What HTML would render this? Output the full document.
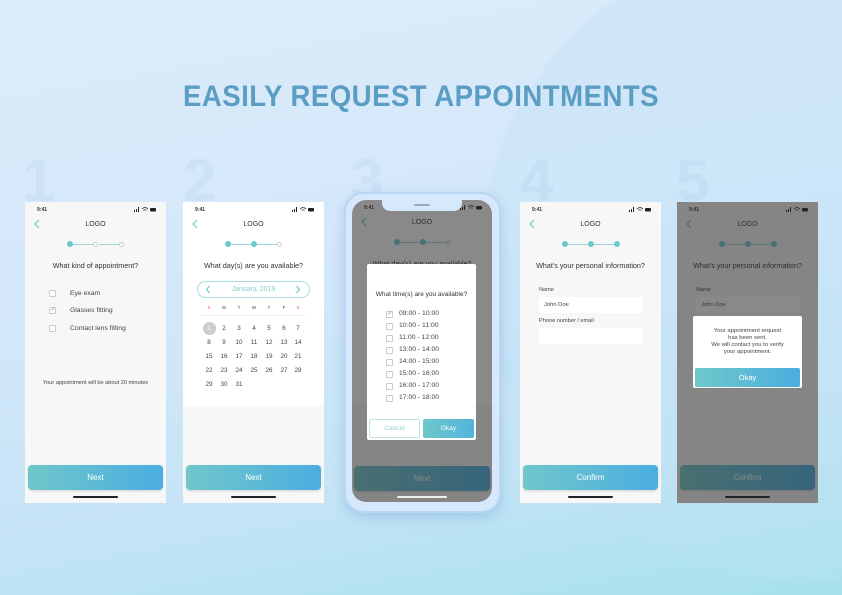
<!DOCTYPE html>
<html><head><meta charset="utf-8"><style>
*{margin:0;padding:0;box-sizing:border-box}
html,body{width:842px;height:595px;overflow:hidden}
#wrap{position:relative;width:842px;height:595px;overflow:hidden;font-family:"Liberation Sans",sans-serif;
background:linear-gradient(170deg,#dcecfa 0%,#d3e7fa 45%,#c4e4f6 75%,#a6e1ec 100%);}
.blob{position:absolute;left:480px;top:-60px;width:640px;height:640px;border-radius:50%;background:rgba(190,225,245,0.3)}
.title{position:absolute;left:0;top:80px;width:842px;text-align:center;font-family:"Liberation Sans Narrow","Liberation Sans",sans-serif;font-weight:bold;font-size:30px;letter-spacing:0.5px;color:#5b9ec4;transform:scaleX(0.92);transform-origin:421px 0}
.num{position:absolute;top:146px;font-size:60px;font-weight:bold;color:rgba(165,200,230,0.2)}
.scr{position:absolute;top:202px;width:141px;height:301px;background:#f7f7f7;overflow:hidden;color:#444}
.a{position:absolute}
.st{left:12px;top:5px;font-size:5px;font-weight:bold;color:#333}
.ic{right:10px;top:5px;width:22px;height:5px}
.back{left:8px;top:17px;width:8px;height:10px}
.logo{left:0;width:100%;top:19px;text-align:center;font-size:7px;color:#333}
.dot{width:6px;height:6px;border-radius:50%;background:#6cc8c9;top:39px}
.dot.o{width:5px;height:5px;background:#fff;border:1px solid #ccc;top:39.5px}
.ln{height:1px;background:#9bd6d6;top:42px;width:20px}
.q{left:0;width:100%;text-align:center;top:59px;font-size:7.2px;color:#333}
.cb{width:7px;height:7px;border:1px solid #ccc;background:#fff;border-radius:1px}
.lab{font-size:6.8px;color:#444}
.btn{left:3px;top:263px;width:135px;height:25px;border-radius:4px;background:linear-gradient(90deg,#70c7ca,#4aaee0);color:#fff;font-size:8px;text-align:center;line-height:25px;box-shadow:0 1px 2px rgba(0,0,0,.15)}
.hb{left:48px;top:294px;width:45px;height:2px;background:#222;border-radius:1px}
.ov{left:0;top:0;width:100%;height:100%;background:rgba(40,40,40,0.55)}
.cal{font-size:6.3px;color:#444;text-align:center;width:14px}
.fld{left:19px;width:104px;height:16px;background:#fff;border-radius:2px;font-size:5.8px;line-height:16px;padding-left:5px;color:#444}
</style></head><body><div id="wrap">
<div class="blob"></div>
<div class="title">EASILY REQUEST APPOINTMENTS</div>
<div class="num" style="left:22px">1</div>
<div class="num" style="left:183px">2</div>
<div class="num" style="left:350px">3</div>
<div class="num" style="left:520px">4</div>
<div class="num" style="left:676px">5</div>

<!-- Screen 1 -->
<div class="scr" style="left:25px">
<div class="a st">9:41</div><svg class="a ic" viewBox="0 0 22 5"><rect x="0" y="3" width="1" height="2" fill="#222"/><rect x="2" y="2" width="1" height="3" fill="#222"/><rect x="4" y="0" width="1" height="5" fill="#222"/><path d="M8 2q3-3 6 0M9.5 3.5q1.5-1.5 3 0" stroke="#222" stroke-width="0.8" fill="none"/><rect x="16" y="1" width="6" height="3.5" rx="1" fill="#222"/></svg>
<svg class="a back" viewBox="0 0 8 10"><path d="M6 1L2 5l4 4" stroke="#6cc8c9" stroke-width="1.2" fill="none"/></svg>
<div class="a logo">LOGO</div>
<div class="a dot" style="left:42px"></div><div class="a ln" style="left:48px"></div><div class="a dot o" style="left:68px"></div><div class="a ln" style="left:74px"></div><div class="a dot o" style="left:94px"></div>
<div class="a q">What kind of appointment?</div>
<div class="a cb" style="left:24px;top:88px"></div><div class="a lab" style="left:45px;top:88px">Eye exam</div>
<div class="a cb" style="left:24px;top:105px"></div><div class="a" style="left:25.5px;top:104px;font-size:6px;color:#888">✓</div><div class="a lab" style="left:45px;top:105px">Glasses fitting</div>
<div class="a cb" style="left:24px;top:123px"></div><div class="a lab" style="left:45px;top:123px">Contact lens fitting</div>
<div class="a" style="left:0;width:100%;text-align:center;top:178px;font-size:5.6px;color:#444">Your appointment will be about 20 minutes</div>
<div class="a btn">Next</div><div class="a hb"></div>
</div>

<!-- Screen 2 -->
<div class="scr" style="left:183px">
<div class="a" style="left:0;top:0;width:141px;height:204px;background:#fff;border-radius:0 0 3px 3px"></div>
<div class="a st">9:41</div><svg class="a ic" viewBox="0 0 22 5"><rect x="0" y="3" width="1" height="2" fill="#222"/><rect x="2" y="2" width="1" height="3" fill="#222"/><rect x="4" y="0" width="1" height="5" fill="#222"/><path d="M8 2q3-3 6 0M9.5 3.5q1.5-1.5 3 0" stroke="#222" stroke-width="0.8" fill="none"/><rect x="16" y="1" width="6" height="3.5" rx="1" fill="#222"/></svg>
<svg class="a back" viewBox="0 0 8 10"><path d="M6 1L2 5l4 4" stroke="#6cc8c9" stroke-width="1.2" fill="none"/></svg>
<div class="a logo">LOGO</div>
<div class="a dot" style="left:42px"></div><div class="a ln" style="left:48px"></div><div class="a dot" style="left:68px"></div><div class="a ln" style="left:74px"></div><div class="a dot o" style="left:94px"></div>
<div class="a q">What day(s) are you available?</div>
<div class="a" style="left:14px;top:79px;width:113px;height:17px;border:1px solid #a8dcdc;border-radius:9px;text-align:center;font-size:7px;line-height:15px;color:#7fcfcf">January, 2019</div>
<svg class="a" style="left:22px;top:83px" width="6" height="9" viewBox="0 0 6 9"><path d="M4.5 1L1.5 4.5l3 3.5" stroke="#6cc8c9" stroke-width="1.1" fill="none"/></svg>
<svg class="a" style="left:112px;top:83px" width="6" height="9" viewBox="0 0 6 9"><path d="M1.5 1l3 3.5-3 3.5" stroke="#6cc8c9" stroke-width="1.1" fill="none"/></svg>
<div class="a" style="left:18px;top:113px;width:104px;height:1px;background:#eee"></div>
<div class="a cal" style="left:19px;top:103px;font-size:4.5px;color:#e66">S</div><div class="a cal" style="left:34px;top:103px;font-size:4.5px">M</div><div class="a cal" style="left:49px;top:103px;font-size:4.5px">T</div><div class="a cal" style="left:64px;top:103px;font-size:4.5px">W</div><div class="a cal" style="left:79px;top:103px;font-size:4.5px">T</div><div class="a cal" style="left:94px;top:103px;font-size:4.5px">F</div><div class="a cal" style="left:108px;top:103px;font-size:4.5px;color:#e66">S</div>
<div class="a" style="left:20px;top:120px;width:13px;height:13px;border-radius:50%;background:#ccc"></div>
<div class="a cal" style="left:19px;top:123px;color:#fff">1</div><div class="a cal" style="left:34px;top:123px">2</div><div class="a cal" style="left:49px;top:123px">3</div><div class="a cal" style="left:64px;top:123px">4</div><div class="a cal" style="left:79px;top:123px">5</div><div class="a cal" style="left:94px;top:123px">6</div><div class="a cal" style="left:108px;top:123px">7</div>
<div class="a cal" style="left:19px;top:137px">8</div><div class="a cal" style="left:34px;top:137px">9</div><div class="a cal" style="left:49px;top:137px">10</div><div class="a cal" style="left:64px;top:137px">11</div><div class="a cal" style="left:79px;top:137px">12</div><div class="a cal" style="left:94px;top:137px">13</div><div class="a cal" style="left:108px;top:137px">14</div>
<div class="a cal" style="left:19px;top:151px">15</div><div class="a cal" style="left:34px;top:151px">16</div><div class="a cal" style="left:49px;top:151px">17</div><div class="a cal" style="left:64px;top:151px">18</div><div class="a cal" style="left:79px;top:151px">19</div><div class="a cal" style="left:94px;top:151px">20</div><div class="a cal" style="left:108px;top:151px">21</div>
<div class="a cal" style="left:19px;top:165px">22</div><div class="a cal" style="left:34px;top:165px">23</div><div class="a cal" style="left:49px;top:165px">24</div><div class="a cal" style="left:64px;top:165px">25</div><div class="a cal" style="left:79px;top:165px">26</div><div class="a cal" style="left:94px;top:165px">27</div><div class="a cal" style="left:108px;top:165px">28</div>
<div class="a cal" style="left:19px;top:179px">29</div><div class="a cal" style="left:34px;top:179px">30</div><div class="a cal" style="left:49px;top:179px">31</div>
<div class="a btn">Next</div><div class="a hb"></div>
</div>

<!-- Phone 3 -->
<div class="a" style="left:344px;top:192px;width:157px;height:321px;border-radius:20px;background:#d6e8fb;border:2px solid #b9d7f5;box-shadow:0 4px 12px rgba(100,150,210,.35)"></div>
<div class="scr" style="left:352px;top:200px;width:140px;height:302px;border-radius:14px;background:#f7f7f7">
<div class="a" style="left:0;top:0;width:140px;height:204px;background:#fff"></div>
<div class="a st">9:41</div><svg class="a ic" viewBox="0 0 22 5"><rect x="0" y="3" width="1" height="2" fill="#222"/><rect x="2" y="2" width="1" height="3" fill="#222"/><rect x="4" y="0" width="1" height="5" fill="#222"/><path d="M8 2q3-3 6 0M9.5 3.5q1.5-1.5 3 0" stroke="#222" stroke-width="0.8" fill="none"/><rect x="16" y="1" width="6" height="3.5" rx="1" fill="#222"/></svg>
<svg class="a back" viewBox="0 0 8 10"><path d="M6 1L2 5l4 4" stroke="#6cc8c9" stroke-width="1.2" fill="none"/></svg>
<div class="a logo">LOGO</div>
<div class="a dot" style="left:42px"></div><div class="a ln" style="left:48px"></div><div class="a dot" style="left:68px"></div><div class="a ln" style="left:74px"></div><div class="a dot o" style="left:94px"></div>
<div class="a q">What day(s) are you available?</div>
<div class="a btn" style="top:266px;left:2px;width:136px">Next</div>
<div class="a ov"></div>
<div class="a" style="left:30px;top:0;width:80px;height:11px;background:#d6e8fb;border-radius:0 0 8px 8px"></div>
<div class="a" style="left:62px;top:4px;width:16px;height:1.5px;background:#9ab;border-radius:1px"></div>
<div class="a" style="left:15px;top:64px;width:109px;height:176px;background:#fff;border-radius:2px"></div>
<div class="a" style="left:15px;top:91px;width:109px;text-align:center;font-size:6.5px;color:#333">What time(s) are you available?</div>
<div class="a cb" style="left:34px;top:111px"></div><div class="a" style="left:35.5px;top:110px;font-size:6px;color:#888">✓</div><div class="a lab" style="left:47px;top:110px">09:00 - 10:00</div>
<div class="a cb" style="left:34px;top:123px"></div><div class="a lab" style="left:47px;top:122px">10:00 - 11:00</div>
<div class="a cb" style="left:34px;top:135px"></div><div class="a lab" style="left:47px;top:134px">11:00 - 12:00</div>
<div class="a cb" style="left:34px;top:147px"></div><div class="a lab" style="left:47px;top:146px">13:00 - 14:00</div>
<div class="a cb" style="left:34px;top:159px"></div><div class="a lab" style="left:47px;top:158px">14:00 - 15:00</div>
<div class="a cb" style="left:34px;top:171px"></div><div class="a lab" style="left:47px;top:170px">15:00 - 16:00</div>
<div class="a cb" style="left:34px;top:183px"></div><div class="a lab" style="left:47px;top:182px">16:00 - 17:00</div>
<div class="a cb" style="left:34px;top:195px"></div><div class="a lab" style="left:47px;top:194px">17:00 - 18:00</div>
<div class="a" style="left:17px;top:219px;width:51px;height:19px;border:1px solid #bfe6e6;border-radius:2px;text-align:center;line-height:17px;font-size:6.5px;color:#8fd3d3">Cancel</div>
<div class="a" style="left:71px;top:219px;width:51px;height:19px;background:linear-gradient(90deg,#6fc8ca,#52b4dc);border-radius:2px;text-align:center;line-height:19px;font-size:6.5px;color:#fff">Okay</div>
<div class="a" style="left:45px;top:296px;width:50px;height:2px;background:#eee;border-radius:1px"></div>
</div>

<!-- Screen 4 -->
<div class="scr" style="left:520px">
<div class="a st">9:41</div><svg class="a ic" viewBox="0 0 22 5"><rect x="0" y="3" width="1" height="2" fill="#222"/><rect x="2" y="2" width="1" height="3" fill="#222"/><rect x="4" y="0" width="1" height="5" fill="#222"/><path d="M8 2q3-3 6 0M9.5 3.5q1.5-1.5 3 0" stroke="#222" stroke-width="0.8" fill="none"/><rect x="16" y="1" width="6" height="3.5" rx="1" fill="#222"/></svg>
<svg class="a back" viewBox="0 0 8 10"><path d="M6 1L2 5l4 4" stroke="#6cc8c9" stroke-width="1.2" fill="none"/></svg>
<div class="a logo">LOGO</div>
<div class="a dot" style="left:42px"></div><div class="a ln" style="left:48px"></div><div class="a dot" style="left:68px"></div><div class="a ln" style="left:74px"></div><div class="a dot" style="left:94px"></div>
<div class="a q">What's your personal information?</div>
<div class="a" style="left:19px;top:85px;font-size:5.6px">Name</div>
<div class="a fld" style="top:95px">John Doe</div>
<div class="a" style="left:19px;top:116px;font-size:5.6px">Phone number / email</div>
<div class="a fld" style="top:126px"></div>
<div class="a btn">Confirm</div><div class="a hb"></div>
</div>

<!-- Screen 5 -->
<div class="scr" style="left:677px">
<div class="a st">9:41</div><svg class="a ic" viewBox="0 0 22 5"><rect x="0" y="3" width="1" height="2" fill="#222"/><rect x="2" y="2" width="1" height="3" fill="#222"/><rect x="4" y="0" width="1" height="5" fill="#222"/><path d="M8 2q3-3 6 0M9.5 3.5q1.5-1.5 3 0" stroke="#222" stroke-width="0.8" fill="none"/><rect x="16" y="1" width="6" height="3.5" rx="1" fill="#222"/></svg>
<svg class="a back" viewBox="0 0 8 10"><path d="M6 1L2 5l4 4" stroke="#6cc8c9" stroke-width="1.2" fill="none"/></svg>
<div class="a logo">LOGO</div>
<div class="a dot" style="left:42px"></div><div class="a ln" style="left:48px"></div><div class="a dot" style="left:68px"></div><div class="a ln" style="left:74px"></div><div class="a dot" style="left:94px"></div>
<div class="a q">What's your personal information?</div>
<div class="a" style="left:19px;top:85px;font-size:5.6px">Name</div>
<div class="a fld" style="top:95px">John Doe</div>
<div class="a btn">Confirm</div>
<div class="a ov"></div>
<div class="a hb"></div>
<div class="a" style="left:16px;top:114px;width:109px;height:72px;background:#fff;border-radius:2px"></div>
<div class="a" style="left:16px;top:126px;width:109px;text-align:center;font-size:5.9px;line-height:7px;color:#444">Your appointment request<br>has been sent.<br>We will contact you to verify<br>your appointment.</div>
<div class="a" style="left:18px;top:166px;width:105px;height:19px;background:linear-gradient(90deg,#6fc8ca,#4aaee0);border-radius:2px;text-align:center;line-height:19px;font-size:7.5px;color:#fff">Okay</div>
</div>
</div></body></html>
